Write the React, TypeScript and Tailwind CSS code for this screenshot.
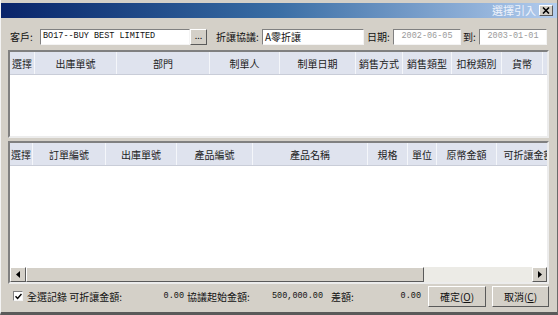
import React from "react";

const cjk = { fontFamily: '"Noto Sans CJK TC", "Liberation Sans", sans-serif' };
const mono = { fontFamily: '"Liberation Mono", "Noto Sans CJK TC", monospace' };

const upperCols: [string, number][] = [
  ["選擇", 25],
  ["出庫單號", 82],
  ["部門", 93],
  ["制單人", 70],
  ["制單日期", 76],
  ["銷售方式", 47],
  ["銷售類型", 49],
  ["扣稅類別", 50],
  ["貨幣", 41],
];

const lowerCols: [string, number][] = [
  ["選擇", 23],
  ["訂單編號", 73],
  ["出庫單號", 71],
  ["產品編號", 76],
  ["產品名稱", 115],
  ["規格", 40],
  ["單位", 29],
  ["原幣金額", 60],
  ["可折讓金額", 64],
];

function Header({ cols }: { cols: [string, number][] }) {
  return (
    <div className="flex h-[23px] shrink-0 bg-[#dfe3ee] border-b border-[#c9cdd8] overflow-hidden">
      {cols.map(([label, w], i) => (
        <div
          key={i}
          style={{ width: w }}
          className="shrink-0 flex items-center justify-center whitespace-nowrap overflow-hidden border-r border-[#f4f6fa] text-[10px] text-[#222]"
        >
          {label}
        </div>
      ))}
    </div>
  );
}

function Field({ w, children, className = "" }: { w: string; children: React.ReactNode; className?: string }) {
  return (
    <div
      className={`${w} shrink-0 h-[16px] bg-white border border-t-[#808080] border-l-[#808080] border-b-[#f4f4f4] border-r-[#f4f4f4] flex items-center px-[2px] overflow-hidden whitespace-nowrap ${className}`}
    >
      {children}
    </div>
  );
}

function RaisedBtn({ className = "", children }: { className?: string; children?: React.ReactNode }) {
  return (
    <div
      className={`shrink-0 bg-[#d4d0c8] border border-t-white border-l-white border-b-[#5a5a5a] border-r-[#5a5a5a] flex items-center justify-center ${className}`}
    >
      {children}
    </div>
  );
}

function Label({ w, children, className = "" }: { w: string; children: React.ReactNode; className?: string }) {
  return <span className={`${w} shrink-0 whitespace-nowrap text-[10px] ${className}`}>{children}</span>;
}

export default function App() {
  return (
    <div
      style={cjk}
      className="w-[558px] h-[315px] bg-[#d4d0c8] flex flex-col pt-[3px] border-l border-l-[#f4f4f4] border-r border-r-[#6a6a6a] border-b-[3px] border-b-[#5a5a5a] text-[10px] text-[#111] overflow-hidden"
    >
      {/* title bar */}
      <div className="h-[15px] shrink-0 bg-gradient-to-r from-[#0a246a] via-[#3a6ea5] to-[#b4cdee] flex items-center justify-end pr-[4px]">
        <span className="text-[11px] text-[#eef3fc] mr-[3px] leading-none">選擇引入</span>
        <RaisedBtn className="w-[14px] h-[11px]">
          <svg width="8" height="7" viewBox="0 0 8 7">
            <path d="M1 0.5 L7 6.5 M7 0.5 L1 6.5" stroke="#000" strokeWidth="1.6" />
          </svg>
        </RaisedBtn>
      </div>

      {/* form row */}
      <div className="mt-[10px] h-[17px] shrink-0 flex items-center pl-[9px]">
        <Label w="w-[30px]">客戶:</Label>
        <Field w="w-[150px]">
          <span style={mono} className="text-[8.5px] text-[#111]">BO17--BUY BEST LIMITED</span>
        </Field>
        <RaisedBtn className="w-[17px] h-[16px]">
          <span className="text-[9px] leading-none -mt-[3px]">...</span>
        </RaisedBtn>
        <Label w="w-[46px]" className="ml-[9px]">折讓協議:</Label>
        <Field w="w-[102px]">
          <span className="text-[10px]">A零折讓</span>
        </Field>
        <Label w="w-[26px]" className="ml-[3px]">日期:</Label>
        <Field w="w-[68px]" className="justify-center">
          <span style={mono} className="text-[8.5px] text-[#9a9a9a]">2002-06-05</span>
        </Field>
        <Label w="w-[16px]" className="ml-[2px]">到:</Label>
        <Field w="w-[68px]" className="justify-center">
          <span style={mono} className="text-[8.5px] text-[#9a9a9a]">2003-01-01</span>
        </Field>
      </div>

      {/* upper grid */}
      <div className="mt-[5px] ml-[7px] w-[541px] h-[88px] shrink-0 bg-white border-2 border-t-[#808080] border-l-[#808080] border-b-[#ececec] border-r-[#ececec] flex flex-col overflow-hidden">
        <Header cols={upperCols} />
        <div className="flex-1 bg-white" />
      </div>

      {/* lower grid */}
      <div className="mt-[3px] ml-[7px] w-[541px] h-[143px] shrink-0 bg-white border-2 border-t-[#808080] border-l-[#808080] border-b-[#ececec] border-r-[#ececec] flex flex-col overflow-hidden">
        <Header cols={lowerCols} />
        <div className="flex-1 bg-white" />
        <div className="h-[15px] shrink-0 flex bg-[#ecebe6]">
          <RaisedBtn className="w-[16px] h-[15px]">
            <svg width="4" height="7" viewBox="0 0 4 7">
              <path d="M4 0 L0 3.5 L4 7 Z" fill="#000" />
            </svg>
          </RaisedBtn>
          <RaisedBtn className="w-[398px] h-[15px]" />
          <div className="flex-1" />
          <RaisedBtn className="w-[15px] h-[15px]">
            <svg width="4" height="7" viewBox="0 0 4 7">
              <path d="M0 0 L4 3.5 L0 7 Z" fill="#000" />
            </svg>
          </RaisedBtn>
        </div>
      </div>

      {/* bottom row */}
      <div className="mt-[1px] h-[22px] shrink-0 flex items-center pl-[12px]">
        <div className="w-[10px] h-[10px] shrink-0 bg-white border border-t-[#808080] border-l-[#808080] border-b-[#f4f4f4] border-r-[#f4f4f4] flex items-center justify-center">
          <svg width="7" height="7" viewBox="0 0 7 7">
            <path d="M0.5 3.2 L2.6 5.4 L6.5 1" stroke="#000" strokeWidth="1.5" fill="none" />
          </svg>
        </div>
        <Label w="w-[96px]" className="ml-[4px]">全選記錄 可折讓金額:</Label>
        <span style={mono} className="w-[61px] shrink-0 text-right text-[8.5px]">0.00</span>
        <Label w="w-[66px]" className="ml-[3px]">協議起始金額:</Label>
        <span style={mono} className="w-[70px] shrink-0 text-right text-[8.5px]">500,000.00</span>
        <Label w="w-[26px]" className="ml-[8px]">差額:</Label>
        <span style={mono} className="w-[64px] shrink-0 text-right text-[8.5px]">0.00</span>
        <RaisedBtn className="ml-[7px] w-[58px] h-[21px]">
          <span className="text-[10px]">
            確定(<span className="underline">O</span>)
          </span>
        </RaisedBtn>
        <RaisedBtn className="ml-[6px] w-[57px] h-[21px]">
          <span className="text-[10px]">
            取消(<span className="underline">C</span>)
          </span>
        </RaisedBtn>
      </div>
    </div>
  );
}
